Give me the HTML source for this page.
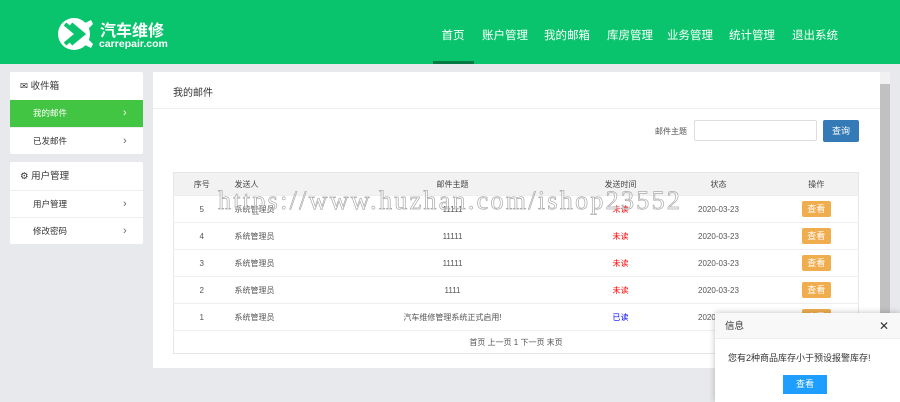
<!DOCTYPE html>
<html><head><meta charset="utf-8"><style>
*{margin:0;padding:0;box-sizing:border-box}
body{width:900px;height:402px;overflow:hidden;background:#e8e9ec;font-family:"Liberation Sans","Noto Sans CJK SC",sans-serif;font-size:9px;color:#333;position:relative}
.hd{position:absolute;left:0;top:0;width:900px;height:64px;background:#09c46c}
.logo{position:absolute;left:57px;top:16px}
.nav span{position:absolute;top:27px;color:#fff;font-size:11.5px;transform:translateX(-50%)}
.ul{position:absolute;left:433px;top:61px;width:41px;height:3px;background:#067a44}
.pn{position:absolute;left:10px;width:133px;background:#fff;border-radius:2px}
.pn div{height:27px;line-height:27px;border-top:1px solid #eee;padding-left:23px;position:relative;font-size:8.5px}
.pn div:first-child{border-top:none;padding-left:10px;font-size:9.5px;height:28px;line-height:29px}
.pn div.act{background:#42c542;color:#fff;border:none}
.pn div .ch{position:absolute;left:113px;top:0;font-size:11px;color:#666}
.pn div.act .ch{color:#fff}
.main{position:absolute;left:153px;top:72px;width:728px;height:296px;background:#fff}
.tt{height:37px;border-bottom:1px solid #eee;padding-left:20px;line-height:44px;font-size:10px}
.tb{position:absolute;left:20px;top:100px;width:686px;border:1px solid #e6e6e6;border-collapse:collapse;table-layout:fixed}
.tb td{height:27px;border-top:1px solid #eee;text-align:center;font-size:8px;color:#555;white-space:nowrap}
.tb tr.h td{height:23px;background:#f2f2f2;border:none;color:#444}
.tb td:nth-child(2){text-align:left;padding-left:5px}
.tb td:nth-child(3){padding-left:14px}
.tb td:nth-child(5){padding-left:12px}
.btn{display:inline-block;background:#f0ad4e;color:#fff;width:29px;height:16px;line-height:16px;border-radius:2px;font-size:9px}
.sb{position:absolute;left:880px;top:72px;width:10px;height:296px;background:#f1f1f1}
.pop{position:absolute;left:715px;top:313px;width:185px;height:89px;background:#fff;box-shadow:0 0 6px rgba(0,0,0,.25)}
.wm{position:absolute;left:218px;top:186px;font-family:"Liberation Serif",serif;font-size:26px;color:rgba(255,255,255,.5);-webkit-text-stroke:0.7px #aaa;letter-spacing:2.3px;white-space:nowrap}
</style></head><body>
<div class="hd">
<div class="logo"><svg width="40" height="36" viewBox="0 0 40 36"><circle cx="17" cy="18" r="16" fill="#fff"/><path d="M8 8 L20 18 L8 28 M14 8 L26 18 L14 28" stroke="#09c46c" stroke-width="4" fill="none"/><path d="M26 8 l8 -4 l2 4 l-6 6z M26 28 l8 4 l2 -4 l-6 -6z" fill="#fff"/></svg></div>
<div style="position:absolute;left:100px;top:17px;color:#fff;font-size:16px;font-weight:bold">汽车维修</div>
<div style="position:absolute;left:99px;top:38px;color:#fff;font-size:10.5px;font-weight:bold">carrepair.com</div>
<div class="nav"><span style="left:453px">首页</span><span style="left:505px">账户管理</span><span style="left:567px">我的邮箱</span><span style="left:630px">库房管理</span><span style="left:690px">业务管理</span><span style="left:752px">统计管理</span><span style="left:815px">退出系统</span></div>
<div class="ul"></div>
</div>
<div class="pn" style="top:72px"><div>✉ 收件箱</div><div class="act">我的邮件<span class="ch">›</span></div><div>已发邮件<span class="ch">›</span></div></div>
<div class="pn" style="top:162px"><div>⚙ 用户管理</div><div>用户管理<span class="ch">›</span></div><div>修改密码<span class="ch">›</span></div></div>
<div class="main">
<div class="tt">我的邮件</div>
<div style="position:absolute;left:502px;top:54px;font-size:8px;color:#555">邮件主题</div>
<div style="position:absolute;left:541px;top:48px;width:123px;height:21px;border:1px solid #ddd;border-radius:2px"></div>
<div style="position:absolute;left:670px;top:48px;width:36px;height:22px;background:#337ab7;color:#fff;border-radius:2px;text-align:center;line-height:22px;font-size:9px">查询</div>
<table class="tb">
<colgroup><col style="width:56px"><col style="width:71px"><col style="width:290px"><col style="width:60px"><col style="width:124px"><col></colgroup>
<tr class="h"><td>序号</td><td>发送人</td><td>邮件主题</td><td>发送时间</td><td>状态</td><td>操作</td></tr>
<tr><td>5</td><td>系统管理员</td><td>11111</td><td style="color:red">未读</td><td>2020-03-23</td><td><span class="btn">查看</span></td></tr>
<tr><td>4</td><td>系统管理员</td><td>11111</td><td style="color:red">未读</td><td>2020-03-23</td><td><span class="btn">查看</span></td></tr>
<tr><td>3</td><td>系统管理员</td><td>11111</td><td style="color:red">未读</td><td>2020-03-23</td><td><span class="btn">查看</span></td></tr>
<tr><td>2</td><td>系统管理员</td><td>1111</td><td style="color:red">未读</td><td>2020-03-23</td><td><span class="btn">查看</span></td></tr>
<tr><td>1</td><td>系统管理员</td><td>汽车维修管理系统正式启用!</td><td style="color:blue">已读</td><td>2020-03-23</td><td><span class="btn">查看</span></td></tr>
<tr><td colspan="6" style="height:23px;text-align:center;padding:0">首页 上一页 1 下一页 末页</td></tr>
</table>
</div>
<div class="sb"><div style="position:absolute;left:0;top:12px;width:10px;height:250px;background:#c1c1c1"></div></div>
<div class="wm">https://www.huzhan.com/ishop23552</div>
<div class="pop">
<div style="height:26px;border-bottom:1px solid #eee;background:#f8f8f8;line-height:27px;padding-left:10px;font-size:9.5px">信息<span style="position:absolute;right:11px;top:0;font-size:12px">✕</span></div>
<div style="padding:12px 0 0 13px;font-size:9px">您有2种商品库存小于预设报警库存!</div>
<div style="position:absolute;left:68px;top:62px;width:44px;height:19px;background:#1e9fff;color:#fff;text-align:center;line-height:19px;font-size:9px">查看</div>
</div>
</body></html>
